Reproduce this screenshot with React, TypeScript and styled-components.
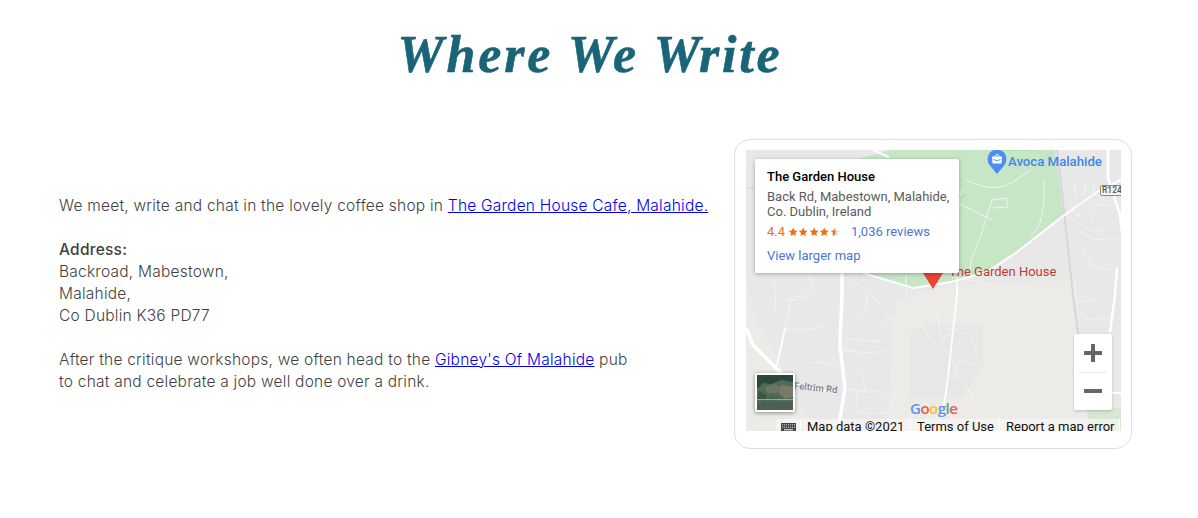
import React from "react";
import styled, { createGlobalStyle } from "styled-components";

const GlobalStyle = createGlobalStyle`
  html, body {
    margin: 0;
    padding: 0;
    background: #fff;
  }
`;

const Page = styled.div`
  width: 1198px;
  height: 518px;
  overflow: hidden;
  box-sizing: border-box;
  padding-right: 18px;
`;

const Title = styled.h1`
  margin: 0;
  padding-top: 25px;
  height: 115px;
  box-sizing: border-box;
  text-align: center;
  font-family: "Liberation Serif", serif;
  font-style: italic;
  font-weight: 700;
  font-size: 52px;
  line-height: 60px;
  letter-spacing: 2.8px;
  color: #1a6478;
  -webkit-text-stroke: 0.6px #1a6478;
`;

const Row = styled.div`
  display: flex;
  align-items: center;
  justify-content: space-between;
  padding: 24px 48px 0 59px;
`;

const Copy = styled.div`
  font-family: "Inter", sans-serif;
  font-size: 15.5px;
  font-weight: 300;
  letter-spacing: 0.23px;
  line-height: 22px;
  color: #3f3f3f;
  margin-top: -1px;

  p {
    margin: 0 0 22px;
  }

  p:last-child {
    margin: 0;
  }

  a {
    color: #0000ee;
  }

  strong {
    font-weight: 500;
  }
`;

const MapCard = styled.div`
  width: 398px;
  height: 310px;
  box-sizing: border-box;
  padding: 10px 10px 10px 11px;
  border: 1px solid #e0e0e0;
  border-radius: 16px;
  flex-shrink: 0;
`;

const MapFrame = styled.div`
  position: relative;
  width: 375px;
  height: 281px;
  overflow: hidden;
  background: #e8e8e8;
  font-family: "Roboto", sans-serif;
`;

const MapArt = styled.svg`
  display: block;
  position: absolute;
  inset: 0;
`;

const InfoCard = styled.div`
  position: absolute;
  left: 9px;
  top: 9px;
  width: 204px;
  height: 114px;
  box-sizing: border-box;
  padding: 10px 4px 0 12px;
  background: #fff;
  border-radius: 2px;
  box-shadow: 0 1px 4px rgba(0, 0, 0, 0.3);
`;

const PlaceName = styled.div`
  font-size: 13px;
  line-height: 16px;
  font-weight: 500;
  color: #000;
`;

const PlaceAddress = styled.div`
  margin-top: 4px;
  font-size: 13px;
  line-height: 15px;
  color: #5b5b5b;
`;

const RatingRow = styled.div`
  display: flex;
  align-items: center;
  margin-top: 5px;
  height: 15px;
  font-size: 13px;
`;

const Score = styled.span`
  color: #e7711b;
  margin-right: 3px;
`;

const Reviews = styled.span`
  color: #4a76d4;
  margin-left: 11px;
`;

const LargerMap = styled.div`
  margin-top: 9px;
  font-size: 13px;
  line-height: 15px;
  color: #4a76d4;
`;

const Label = styled.span<{ $color: string; $weight: number; $size: number }>`
  position: absolute;
  white-space: nowrap;
  line-height: 16px;
  color: ${(p) => p.$color};
  font-weight: ${(p) => p.$weight};
  font-size: ${(p) => p.$size}px;
`;

const GardenLabel = styled(Label)`
  left: 203px;
  top: 114px;
`;

const AvocaLabel = styled(Label)`
  left: 262px;
  top: 4px;
`;

const RoadLabel = styled(Label)`
  left: 48px;
  top: 230px;
  transform: rotate(6deg);
`;

const RouteBadge = styled.span`
  position: absolute;
  left: 354px;
  top: 35px;
  width: 26px;
  height: 11px;
  box-sizing: border-box;
  border: 1px solid #8a8a8a;
  border-radius: 2px;
  background: #f4f4f4;
  color: #555;
  font-size: 8.5px;
  line-height: 9px;
  font-weight: 500;
  padding-left: 1px;
`;

const ZoomControl = styled.div`
  position: absolute;
  left: 328px;
  top: 184px;
  width: 38px;
  height: 76px;
  background: #fff;
  border-radius: 2px;
  box-shadow: 0 1px 3px rgba(0, 0, 0, 0.2);
  display: flex;
  flex-direction: column;
`;

const ZoomButton = styled.div`
  flex: 1;
  display: flex;
  align-items: center;
  justify-content: center;
`;

const ZoomDivider = styled.div`
  height: 1px;
  margin: 0 5px;
  background: #e6e6e6;
`;

const SatelliteThumb = styled.div`
  position: absolute;
  left: 9px;
  top: 223px;
  width: 40px;
  height: 39px;
  box-sizing: border-box;
  border: 2px solid #fff;
  border-radius: 2px;
  box-shadow: 0 1px 4px rgba(0, 0, 0, 0.4);
  overflow: hidden;
  background: #3f5a48;

  svg {
    display: block;
  }
`;

const GoogleMark = styled.div`
  position: absolute;
  left: 164px;
  top: 249px;
  font-family: "Open Sans", sans-serif;
  font-size: 15px;
  line-height: 18px;
  font-weight: 600;
  letter-spacing: -0.5px;
  opacity: 0.85;
`;

const Letter = styled.span<{ $color: string }>`
  color: ${(p) => p.$color};
`;

const FooterBar = styled.div`
  position: absolute;
  left: 30px;
  top: 269px;
  right: 0;
  height: 16px;
  display: flex;
  font-size: 13px;
  line-height: 16px;
  color: #111;
`;

const FooterItem = styled.div<{ $width: number }>`
  width: ${(p) => p.$width}px;
  box-sizing: border-box;
  padding-left: 6px;
  flex-shrink: 0;
  white-space: nowrap;
  background: rgba(245, 245, 245, 0.75);
  border-right: 1px solid #fff;
`;

const KeyboardSlot = styled(FooterItem)`
  padding: 4px 0 0 5px;

  svg {
    display: block;
  }
`;

const thinRoads = [
  "M39 178 L45 150 L44 145",
  "M44 145 Q60 150 68 140 L60 120",
  "M39 178 Q60 182 80 176",
  "M96 200 Q130 205 140 200 M110 172 Q125 160 120 145",
  "M94 198 Q115 200 122 212 M94 188 L135 192",
  "M60 215 Q75 205 105 228",
  "M99 238 Q125 245 135 240 Q145 250 152 240",
  "M110 245 L112 262 Q130 265 145 262 L150 240 M116 222 L120 242",
  "M105 130 Q130 145 146 170 M133 172 L152 165",
  "M170 165 Q180 190 205 205 M190 160 L196 190 L212 178",
  "M205 205 L212 225 L196 230 M212 225 Q225 240 228 250 M211 210 L232 215 L240 225",
  "M200 178 L225 185 L232 205",
  "M28 130 L30 160 M40 150 L50 150",
  "M334 160 Q340 175 360 168 M332 152 L348 150",
  "M220 30 Q250 45 270 30 L284 20 M246 50 L235 85 L225 110 L224 130",
  "M246 50 L260 48 L262 57 L246 58",
  "M210 52 Q230 62 246 70 M216 40 L212 55",
  "M298 30 Q300 75 285 85",
  "M320 65 Q340 80 355 82 M325 60 L340 70 M335 95 L345 115 L365 120",
  "M340 32 L338 46 M348 35 L346 46 M328 32 L330 46 M358 36 L356 46 M345 55 L365 55 M345 62 L345 72",
  "M334 82 L350 90 L372 88",
  "M160 125 L160 145 M205 127 L250 135",
];

const MapDrawing = () => (
  <MapArt width="375" height="281" viewBox="0 0 375 281">
    <rect width="375" height="281" fill="#e8e8e8" />
    <path d="M0 130 L10 170 L70 281 L0 281 Z" fill="#ecebe8" />
    <path d="M140 281 L150 150 L205 135 L330 130 L340 281 Z" fill="#ecebe8" />
    <path d="M164 182 L184 174 L237 174 L237 215 L217 248 L164 248 Z" fill="#e7e7e6" />
    <path d="M340 258 L375 258 L375 281 L345 281 Z" fill="#d6e8d0" />
    <path d="M144 0 L309 0 L317 65 L271 102 L241 122 L205 131 L167 138 L117 124 L60 115 L60 24 Z" fill="#c6e6c5" />
    <path d="M0 38 L12 38" fill="none" stroke="#bcdcf5" strokeWidth="1" />
    <path d="M127 0 L143 7" fill="none" stroke="#fff" strokeWidth="2" />
    <path d="M362 0 L362 28 L374 65 L378 100 M371 118 L369 145 L364 182" fill="none" stroke="#fff" strokeWidth="2.5" />
    <path d="M311 0 L317 52 L327 145 L332 183 L336 200" fill="none" stroke="#d3d6da" strokeWidth="2" />
    <path d="M375 30 L354 40 L317 66 L271 102 L241 122 L205 132 L167 138 L117 123" fill="none" stroke="#fff" strokeWidth="2" />
    <path d="M96 120 L96 145 L94 195 L99 238 L92 281" fill="none" stroke="#fff" strokeWidth="3.5" />
    <path d="M0 178 L7 195 L45 233" fill="none" stroke="#fff" strokeWidth="3.5" />
    <path d="M211 128 L211 145 L201 235 L196 268" fill="none" stroke="#fff" strokeWidth="1.8" />
    <path d="M39 178 L31 215" fill="none" stroke="#fff" strokeWidth="1.8" />
    <path d="M45 233 L90 243 M340 242 L375 243" fill="none" stroke="#fff" strokeWidth="1.8" />
    {thinRoads.map((d) => (
      <path key={d} d={d} fill="none" stroke="#f3f3f3" strokeWidth="1" />
    ))}
    <path d="M212 48 L220 45 M245 0 L290 0" fill="none" stroke="#a8d8a8" strokeWidth="1" />
    <path d="M177 123 L197 123 L187 139 Z" fill="#ea4335" />
    <circle cx="251" cy="9" r="9.500" fill="#4b8cf5" />
    <path d="M243.500 15 L251 24 L258.500 15 Z" fill="#4b8cf5" />
    <path d="M246 6.500 H256 L255.500 13.500 H246.500 Z" fill="#fff" />
    <path d="M248.500 6.500 Q251 2.500 253.500 6.500" fill="none" stroke="#fff" strokeWidth="1" />
    <path d="M247.500 9.500 Q251 12 254.500 9.500" fill="none" stroke="#4b8cf5" strokeWidth="0.9" />
  </MapArt>
);

const Star = ({ fill }: { fill: string }) => (
  <svg width="10.4" height="10" viewBox="0 0 20 20">
    <path d="M10 1l2.7 6 6.3.6-4.8 4.2 1.5 6.4L10 14.8l-5.7 3.4 1.5-6.4L1 7.6 7.3 7z" fill={fill} />
  </svg>
);

const Stars = () => (
  <>
    <Star fill="#e7711b" />
    <Star fill="#e7711b" />
    <Star fill="#e7711b" />
    <Star fill="#e7711b" />
    <svg width="10.4" height="10" viewBox="0 0 20 20">
      <defs>
        <linearGradient id="halfStar">
          <stop offset="50%" stopColor="#e7711b" />
          <stop offset="50%" stopColor="#d9d9d9" />
        </linearGradient>
      </defs>
      <path d="M10 1l2.7 6 6.3.6-4.8 4.2 1.5 6.4L10 14.8l-5.7 3.4 1.5-6.4L1 7.6 7.3 7z" fill="url(#halfStar)" />
    </svg>
  </>
);

const App = () => (
  <Page>
    <GlobalStyle />
    <Title>Where We Write</Title>
    <Row>
      <Copy>
        <p>
          We meet, write and chat in the lovely coffee shop in{" "}
          <a href="#garden">The Garden House Cafe, Malahide.</a>
        </p>
        <p>
          <strong>Address:</strong>
          <br />
          Backroad, Mabestown,
          <br />
          Malahide,
          <br />
          Co Dublin K36 PD77
        </p>
        <p>
          After the critique workshops, we often head to the{" "}
          <a href="#gibneys">Gibney's Of Malahide</a> pub
          <br />
          to chat and celebrate a job well done over a drink.
        </p>
      </Copy>
      <MapCard>
        <MapFrame>
          <MapDrawing />
          <GardenLabel $color="#c5392f" $weight={400} $size={13}>
            The Garden House
          </GardenLabel>
          <AvocaLabel $color="#3f86ee" $weight={500} $size={13.2}>
            Avoca Malahide
          </AvocaLabel>
          <RoadLabel $color="#7d8389" $weight={500} $size={9.5}>
            Feltrim Rd
          </RoadLabel>
          <RouteBadge>R124</RouteBadge>
          <InfoCard>
            <PlaceName>The Garden House</PlaceName>
            <PlaceAddress>
              Back Rd, Mabestown, Malahide,
              <br />
              Co. Dublin, Ireland
            </PlaceAddress>
            <RatingRow>
              <Score>4.4</Score>
              <Stars />
              <Reviews>1,036 reviews</Reviews>
            </RatingRow>
            <LargerMap>View larger map</LargerMap>
          </InfoCard>
          <ZoomControl>
            <ZoomButton>
              <svg width="18" height="18" viewBox="0 0 18 18">
                <path d="M7 0h4v7h7v4h-7v7H7v-7H0V7h7z" fill="#666" />
              </svg>
            </ZoomButton>
            <ZoomDivider />
            <ZoomButton>
              <svg width="18" height="4" viewBox="0 0 18 4">
                <rect width="18" height="4" fill="#666" />
              </svg>
            </ZoomButton>
          </ZoomControl>
          <SatelliteThumb>
            <svg width="36" height="35" viewBox="0 0 36 35">
              <rect width="36" height="35" fill="#55695a" />
              <path d="M0 0H36V7L24 5L14 9L6 8L0 14Z" fill="#2c4838" />
              <path d="M8 12L18 9L26 14L20 18L10 18Z" fill="#6a7764" />
              <path d="M24 10L36 12V22L28 24L22 18Z" fill="#7a7a6a" />
              <path d="M2 16L10 20L8 26L0 24Z" fill="#3c5644" />
              <path d="M12 20L22 22L18 26L12 25Z" fill="#48604e" />
              <path d="M0 27H36V35H0Z" fill="#4a6050" />
              <path d="M0 24.500H36" stroke="#b9c2b4" strokeWidth="0.7" />
            </svg>
          </SatelliteThumb>
          <GoogleMark>
            <Letter $color="#4285f4">G</Letter>
            <Letter $color="#ea4335">o</Letter>
            <Letter $color="#fbbc05">o</Letter>
            <Letter $color="#4285f4">g</Letter>
            <Letter $color="#34a853">l</Letter>
            <Letter $color="#ea4335">e</Letter>
          </GoogleMark>
          <FooterBar>
            <KeyboardSlot $width={25}>
              <svg width="15" height="9" viewBox="0 0 15 9">
                <rect width="15" height="9" fill="#444" />
                <path d="M1 1.800H14M1 4.200H14" stroke="#fff" strokeWidth="0.8" strokeDasharray="1.200 0.800" />
                <path d="M3 6.800H12" stroke="#fff" strokeWidth="1" />
              </svg>
            </KeyboardSlot>
            <FooterItem $width={110}>Map data ©2021</FooterItem>
            <FooterItem $width={89}>Terms of Use</FooterItem>
            <FooterItem $width={120}>Report a map error</FooterItem>
          </FooterBar>
        </MapFrame>
      </MapCard>
    </Row>
  </Page>
);

export default App;
